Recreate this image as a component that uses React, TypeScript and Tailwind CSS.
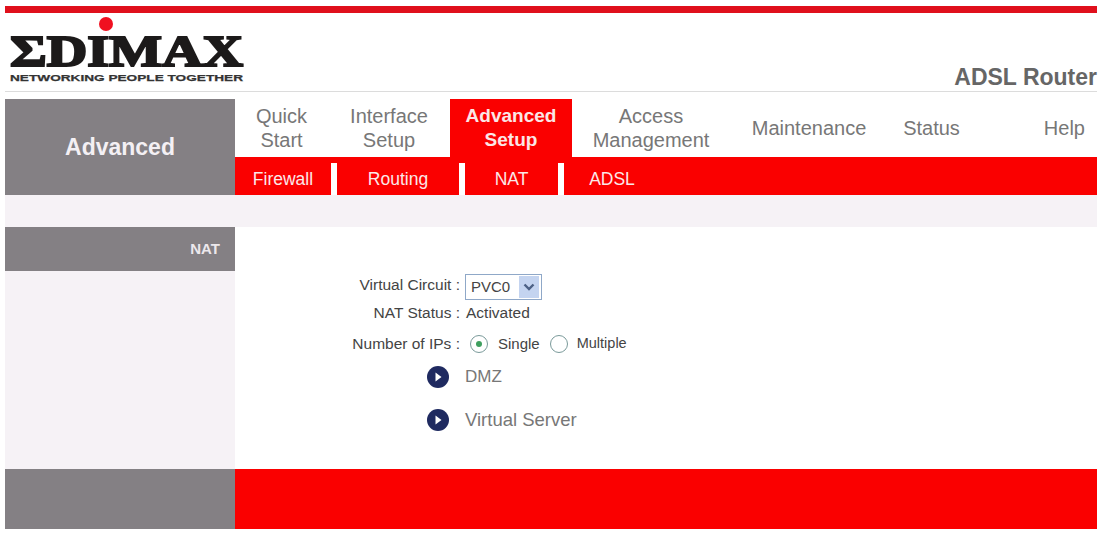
const navItems = [
  { label: ['Quick', 'Start'], width: 'w-[93px]' },
  { label: ['Interface', 'Setup'], width: 'w-[122px]' },
  { label: ['Advanced', 'Setup'], width: 'w-[122px]', active: true },
  { label: ['Access', 'Management'], width: 'w-[158px]' },
  { label: ['Maintenance'], width: 'w-[158px]' },
  { label: ['Status'], width: 'w-[87px]' },
];

const subItems = [
  { label: 'Firewall', width: 'w-[102px]' },
  { label: 'Routing', width: 'w-[128px]' },
  { label: 'NAT', width: 'w-[99px]' },
  { label: 'ADSL', width: 'w-[96px]' },
];

function Logo() {
  return (
    <svg width="240" height="76" viewBox="0 0 240 76" className="block">
      <circle cx="101" cy="9" r="7" fill="#f01020" />
      <text
        x="5"
        y="51"
        textLength="233"
        lengthAdjust="spacingAndGlyphs"
        fontFamily="'Liberation Serif', 'DejaVu Serif', serif"
        fontWeight="700"
        fontSize="44"
        fill="#1c1a1a"
        stroke="#1c1a1a"
        strokeWidth="2"
      >
        ΣDIMAX
      </text>
      <text
        x="5"
        y="66"
        textLength="233"
        lengthAdjust="spacingAndGlyphs"
        fontFamily="'Liberation Sans', Arial, sans-serif"
        fontWeight="700"
        fontSize="9"
        fill="#333"
        stroke="#333"
        strokeWidth="0.25"
      >
        NETWORKING PEOPLE TOGETHER
      </text>
    </svg>
  );
}

function ArrowBullet() {
  return (
    <svg width="24" height="24" viewBox="0 0 24 24" className="shrink-0">
      <circle cx="12" cy="12" r="11" fill="#1f2a60" />
      <path d="M9.5 7.5 L15.5 12 L9.5 16.5 Z" fill="#fff" />
    </svg>
  );
}

function Radio({ checked }: { checked?: boolean }) {
  return (
    <span className="flex h-[18px] w-[18px] items-center justify-center rounded-full border border-[#7a9a9a] bg-white">
      {checked && <span className="h-[6px] w-[6px] rounded-full bg-[#3f9f5f]" />}
    </span>
  );
}

export default function App() {
  return (
    <div className="h-[535px] w-[1100px] overflow-hidden bg-white pl-[5px] pr-[3px] pt-[6px] font-['Liberation_Sans',Arial,sans-serif]">
      <div className="h-[7px] bg-[#e0101c]" />

      {/* Header */}
      <div className="flex h-[79px] items-end justify-between border-b border-[#dcdcdc]">
        <Logo />
        <span className="pb-[1px] text-[23px] font-bold leading-[26px] text-[#666]">ADSL Router</span>
      </div>

      <div className="mt-[7px] flex h-[96px]">
        <div className="flex w-[230px] items-center justify-center bg-[#848084] text-[23px] font-bold text-[#f4f0f4]">
          Advanced
        </div>
        <div className="flex flex-1 flex-col">
          <div className="flex h-[58px]">
            {navItems.map(item => (
              <div
                key={item.label[0]}
                className={`flex flex-col items-center justify-center text-center leading-[24px] ${item.width} ${item.active ? 'bg-[#fa0000] text-[19px] font-bold text-[#fbe6e6]' : 'text-[20px] text-[#777]'}`}
              >
                {item.label.map(line => (
                  <span key={line}>{line}</span>
                ))}
              </div>
            ))}
            <div className="flex flex-1 items-center justify-end pr-3 text-[20px] text-[#777]">Help</div>
          </div>
          <div className="flex h-[38px] bg-[#fa0000] pt-[6px]">
            {subItems.map((item, i) => (
              <div
                key={item.label}
                className={`flex items-center justify-center text-[17.5px] text-[#fbe8e8] ${item.width} ${i < 3 ? 'border-r-[6px] border-white' : ''}`}
              >
                {item.label}
              </div>
            ))}
          </div>
        </div>
      </div>

      {/* Spacer band */}
      <div className="h-[32px] bg-[#f6f2f6]" />

      {/* Body */}
      <div className="flex h-[242px]">
        <div className="w-[230px] bg-[#f6f2f6]">
          <div className="flex h-[44px] items-center justify-end bg-[#848084] pr-[15px] text-[15px] font-bold text-[#ece8ec]">
            NAT
          </div>
        </div>
        <div className="flex-1 pt-[45px] text-[15.5px] text-[#444]">
          <div className="flex h-[30px] items-center">
            <span className="w-[225px] pb-1 text-right">Virtual Circuit :</span>
            <span className="ml-[5px] flex h-[26px] w-[77px] items-center border border-[#8fa8c8] pl-[5px] pr-[2px]">
              <span className="flex-1 text-[15px]">PVC0</span>
              <span className="flex h-[22px] w-[20px] items-center justify-center bg-[#c4d4f0]">
                <svg width="12" height="8" viewBox="0 0 12 8">
                  <path d="M1.5 1.5 L6 6 L10.5 1.5" fill="none" stroke="#4d6185" strokeWidth="2.4" />
                </svg>
              </span>
            </span>
          </div>
          <div className="-mt-px flex h-[24px] items-center">
            <span className="w-[225px] text-right">NAT Status :</span>
            <span className="ml-[6px]">Activated</span>
          </div>
          <div className="mt-[4px] flex h-[30px] items-center">
            <span className="w-[225px] text-right">Number of IPs :</span>
            <span className="ml-[10px] flex items-center">
              <Radio checked />
              <span className="ml-[10px] text-[15px]">Single</span>
              <span className="ml-[10px]"><Radio /></span>
              <span className="ml-[9px] text-[14.5px]">Multiple</span>
            </span>
          </div>
          <div className="ml-[191px] mt-[3px] flex h-[30px] items-center gap-[15px] text-[17px] text-[#777]">
            <ArrowBullet />
            <span>DMZ</span>
          </div>
          <div className="ml-[191px] mt-[13px] flex h-[30px] items-center gap-[15px] text-[18.5px] text-[#777]">
            <ArrowBullet />
            <span>Virtual Server</span>
          </div>
        </div>
      </div>

      {/* Footer */}
      <div className="flex h-[60px]">
        <div className="w-[230px] bg-[#848084]" />
        <div className="flex-1 bg-[#fa0000]" />
      </div>
    </div>
  );
}
